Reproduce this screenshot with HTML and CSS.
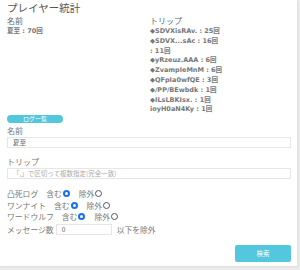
FILE: index.html
```html
<!DOCTYPE html>
<html lang="ja">
<head>
<meta charset="utf-8">
<link rel="stylesheet" href="styles.css">
</head>
<body>
<div class="panel">
  <div class="title">プレイヤー統計</div>
  <div class="stats">
    <div class="col col-left">
      <div class="col-head">名前</div>
      <div class="entry">夏至 : 70回</div>
    </div>
    <div class="col col-right">
      <div class="col-head">トリップ</div>
      <div class="entry">◆SDVXisRAv. : 25回</div>
      <div class="entry">◆SDVX...sAc : 16回</div>
      <div class="entry">: 11回</div>
      <div class="entry">◆yRzeuz.AAA : 6回</div>
      <div class="entry">◆ZvampleMnM : 6回</div>
      <div class="entry">◆QFpIa0wfQE : 3回</div>
      <div class="entry">◆/PP/BEwbdk : 1回</div>
      <div class="entry">◆ILsLBKIsx. : 1回</div>
      <div class="entry">ioyH0aN4Ky : 1回</div>
    </div>
  </div>
  <div class="log-btn">ログ一覧</div>
  <div class="field">
    <div class="label">名前</div>
    <div class="input">夏至</div>
  </div>
  <div class="field field-trip">
    <div class="label">トリップ</div>
    <div class="input placeholder">「,」で区切って複数指定(完全一致)</div>
  </div>
  <div class="options">
    <div class="opt-row">
      <span class="opt-name">凸死ログ</span>
      <span class="opt-choice">含む<span class="radio on"></span></span>
      <span class="opt-choice">除外<span class="radio"></span></span>
    </div>
    <div class="opt-row">
      <span class="opt-name">ワンナイト</span>
      <span class="opt-choice">含む<span class="radio on"></span></span>
      <span class="opt-choice">除外<span class="radio"></span></span>
    </div>
    <div class="opt-row">
      <span class="opt-name">ワードウルフ</span>
      <span class="opt-choice">含む<span class="radio on"></span></span>
      <span class="opt-choice">除外<span class="radio"></span></span>
    </div>
    <div class="opt-row msg-row">
      <span class="opt-name">メッセージ数</span>
      <span class="num-input">0</span>
      <span class="suffix">以下を除外</span>
    </div>
  </div>
  <div class="actions">
    <div class="search-btn">検索</div>
  </div>
</div>
</body>
</html>
```
FILE: styles.css
```css
html, body {
  margin: 0;
  padding: 0;
}
body {
  width: 300px;
  height: 270px;
  background: #ececec;
  font-family: "Noto Sans CJK JP", "Noto Sans", sans-serif;
  color: #666;
  overflow: hidden;
}
.panel {
  box-sizing: border-box;
  width: 298px;
  height: 266px;
  background: #fff;
  border-right: 1px solid #e2e2e2;
  box-shadow: 0 1px 2px rgba(0,0,0,0.08);
  padding: 1px 6px 0 7px;
}
.title {
  font-size: 10.5px;
  line-height: 14px;
  color: #555;
}
.stats {
  display: flex;
}
.col-left {
  width: 143px;
}
.col-head {
  font-size: 8px;
  line-height: 11px;
  color: #666;
  margin-bottom: 1px;
}
.entry {
  font-family: "DejaVu Sans", "Noto Sans CJK JP", sans-serif;
  font-weight: bold;
  font-size: 6.5px;
  line-height: 9.8px;
  color: #777;
  white-space: nowrap;
}
.log-btn {
  width: 56px;
  height: 8px;
  margin-top: 0;
  border-radius: 4px;
  background: #52c7de;
  color: #fff;
  font-size: 6px;
  line-height: 8px;
  text-align: center;
}
.field {
  margin-top: 3px;
}
.field-trip {
  margin-top: 9px;
}
.label {
  font-size: 8px;
  line-height: 10px;
  color: #777;
  margin-bottom: 1px;
}
.input {
  box-sizing: border-box;
  height: 11px;
  border: 1px solid #e6e6e6;
  padding-left: 5px;
  font-size: 6.5px;
  line-height: 9px;
  color: #666;
}
.input.placeholder {
  color: #aaa;
}
.options {
  margin-top: 9px;
  font-size: 7.8px;
  color: #777;
}
.opt-row {
  display: flex;
  align-items: center;
  height: 11.5px;
}
.opt-name {
  margin-right: 8px;
}
.opt-choice {
  display: flex;
  align-items: center;
  margin-right: 9px;
}
.radio {
  box-sizing: border-box;
  width: 7px;
  height: 7px;
  border-radius: 50%;
  border: 1px solid #555;
  margin-left: 1px;
}
.radio.on {
  border: 2px solid #1a6ff0;
}
.msg-row {
  margin-top: 1px;
  height: 12px;
}
.msg-row .opt-name {
  margin-right: 2px;
}
.num-input {
  box-sizing: border-box;
  width: 56px;
  height: 11px;
  border: 1px solid #e6e6e6;
  padding-left: 5px;
  font-size: 6.5px;
  line-height: 9px;
  color: #666;
}
.suffix {
  margin-left: 5px;
}
.actions {
  display: flex;
  justify-content: flex-end;
  margin-top: 9px;
}
.search-btn {
  width: 56px;
  height: 17px;
  border-radius: 2px;
  background: #52c7de;
  color: #fff;
  font-size: 6.5px;
  line-height: 17px;
  text-align: center;
}
```
